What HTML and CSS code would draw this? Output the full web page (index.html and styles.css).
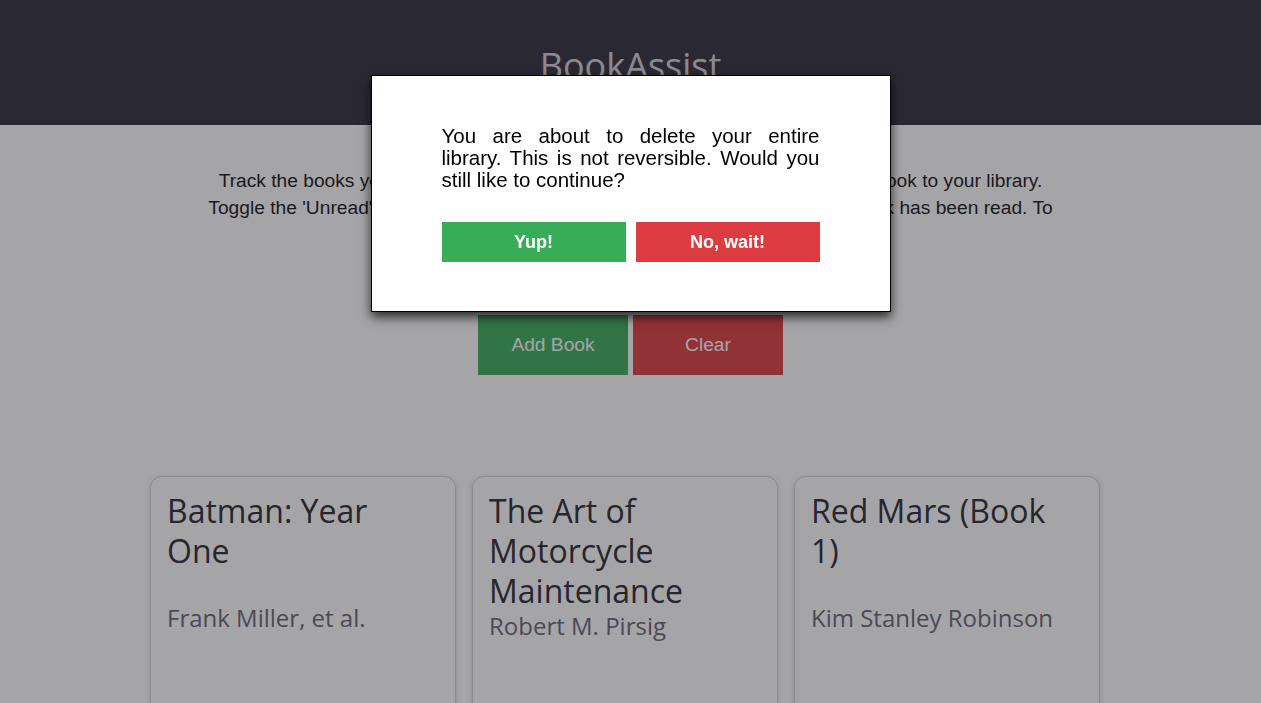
FILE: index.html
```html
<!DOCTYPE html>
<html lang="en">
<head>
<meta charset="utf-8">
<title>BookAssist</title>
<link rel="stylesheet" href="styles.css">
</head>
<body>
<header class="site-header">
  <h1 class="brand">BookAssist</h1>
</header>
<main class="content">
  <p class="intro">Track the books you've read and want to read. Click 'Add Book' to add a new book to your library. Toggle the 'Unread' button on each of your book cards to indicate when this book has been read. To remove a book, click the 'X' on its card.</p>
  <div class="actions">
    <button class="btn btn-add">Add Book</button>
    <button class="btn btn-clear">Clear</button>
  </div>
  <section class="library">
    <article class="card">
      <h2 class="card-title">Batman: Year One</h2>
      <p class="card-author">Frank Miller, et al.</p>
    </article>
    <article class="card">
      <h2 class="card-title">The Art of Motorcycle Maintenance</h2>
      <p class="card-author">Robert M. Pirsig</p>
    </article>
    <article class="card">
      <h2 class="card-title">Red Mars (Book 1)</h2>
      <p class="card-author">Kim Stanley Robinson</p>
    </article>
  </section>
</main>
<div class="overlay">
  <div class="modal">
    <p class="modal-text">You are about to delete your entire library. This is not reversible. Would you still like to continue?</p>
    <div class="modal-actions">
      <button class="mbtn mbtn-yes">Yup!</button>
      <button class="mbtn mbtn-no">No, wait!</button>
    </div>
  </div>
</div>
</body>
</html>
```
FILE: styles.css
```css
html {
  overflow: hidden;
}
body {
  margin: 0;
  background: #ffffff;
  font-family: "Liberation Sans", Arial, sans-serif;
  color: #111;
}
.site-header {
  height: 125px;
  background: #2c2c38;
  display: flex;
  justify-content: center;
  box-sizing: border-box;
  padding-top: 42px;
}
.brand {
  margin: 0;
  font-family: "Open Sans", sans-serif;
  font-weight: 500;
  font-size: 36px;
  line-height: 48px;
  color: #d4d3d8;
}
.intro {
  max-width: 860px;
  margin: 42px auto 0;
  font-size: 19.2px;
  line-height: 27px;
  text-align: center;
  color: #111;
}
.actions {
  display: flex;
  justify-content: center;
  gap: 5px;
  margin-top: 67px;
}
.btn {
  width: 150px;
  height: 60px;
  border: none;
  color: #fff;
  font-family: "Liberation Sans", Arial, sans-serif;
  font-size: 19.2px;
  padding: 0;
}
.btn-add { background: #38ad57; }
.btn-clear { background: #dc3c3f; }
.library {
  display: flex;
  justify-content: center;
  gap: 16px;
  padding-right: 11px;
  margin-top: 101px;
}
.card {
  width: 306px;
  min-height: 320px;
  box-sizing: border-box;
  border: 1px solid #d0d0d2;
  border-radius: 12px;
  box-shadow: 0 1px 5px rgba(0, 0, 0, 0.18);
  padding: 14px 16px 16px;
  font-family: "Open Sans", sans-serif;
}
.card-title {
  margin: 0;
  padding-right: 20px;
  min-height: 112px;
  font-size: 32px;
  font-weight: 500;
  line-height: 40px;
  color: #26252f;
}
.card-author {
  margin: 0;
  font-size: 24px;
  line-height: 30px;
  color: #67646f;
}
.overlay {
  position: fixed;
  inset: 0;
  background: rgba(40, 38, 46, 0.42);
  display: flex;
  justify-content: center;
  align-items: flex-start;
  padding-top: 75px;
}
.modal {
  width: 520px;
  box-sizing: border-box;
  background: #fff;
  border: 1px solid #000;
  box-shadow: 0 5px 10px rgba(0, 0, 0, 0.75);
  padding: 49px 70px 49px;
}
.modal-text {
  margin: 0;
  font-size: 20.5px;
  line-height: 22px;
  text-align: justify;
  color: #000;
}
.modal-actions {
  display: flex;
  gap: 10px;
  margin-top: 31px;
}
.mbtn {
  flex: 1;
  height: 40px;
  border: none;
  color: #fff;
  font-family: "Liberation Sans", Arial, sans-serif;
  font-size: 18px;
  font-weight: bold;
  padding: 0;
}
.mbtn-yes { background: #38ad57; }
.mbtn-no { background: #dc3c3f; }
```
